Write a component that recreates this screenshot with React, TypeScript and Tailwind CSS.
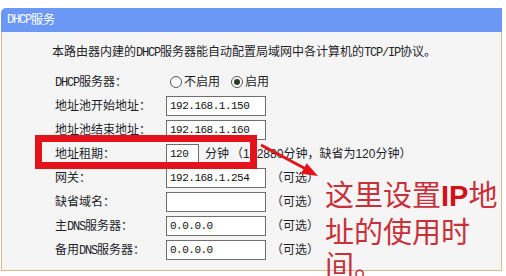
import React from "react";

function Radio({ checked }: { checked?: boolean }) {
  return (
    <span className="inline-flex items-center justify-center w-[12px] h-[12px] rounded-full border border-[#555] bg-white">
      {checked ? <span className="w-[6px] h-[6px] rounded-full bg-[#2a3a2a]" /> : null}
    </span>
  );
}

function M({ children }: { children: React.ReactNode }) {
  return (
    <span className="font-['Liberation_Mono',monospace] text-[12px] tracking-[-1.2px]">{children}</span>
  );
}

function Field({ value, w = "w-[100px]" }: { value: string; w?: string }) {
  return (
    <div
      className={`${w} h-[20px] bg-white border border-[#6f6f6f] flex items-center pl-[3px] text-[11px] tracking-[-0.5px] text-[#111] font-['Liberation_Mono',monospace]`}
    >
      {value}
    </div>
  );
}

function Label({ children }: { children: React.ReactNode }) {
  return <div className="w-[111px] shrink-0">{children}</div>;
}

function Optional() {
  return <span className="ml-[5px]">（可选）</span>;
}

export default function App() {
  return (
    <div className="relative w-[506px] h-[276px] bg-white overflow-hidden font-['Liberation_Sans','Noto_Sans_CJK_SC',sans-serif] text-[12px]">
      <div className="pt-2 pl-px">
        <div className="w-[501px] h-[24px] bg-[#6b98f4] rounded-tl-[5px] flex items-center pl-[6px] text-white">
          <M>DHCP</M>服务
        </div>
        <div className="w-[501px] bg-[#f5f5f5] border-x border-b border-[#d6b98c] pt-3 pb-2 text-[#1e1e2a]">
          <div className="pl-[50px] leading-4">
            本路由器内建的<M>DHCP</M>服务器能自动配置局域网中各计算机的<M>TCP/IP</M>协议。
          </div>
          <div className="mt-[9px] pl-[53px] flex flex-col">
            <div className="h-[24px] flex items-center">
              <Label>
                <M>DHCP</M>服务器：
              </Label>
              <div className="flex items-center ml-[4px]">
                <Radio />
                <span className="ml-[2px]">不启用</span>
                <span className="ml-[11px] flex items-center">
                  <Radio checked />
                </span>
                <span className="ml-[2px]">启用</span>
              </div>
            </div>
            <div className="h-[24px] flex items-center">
              <Label>地址池开始地址：</Label>
              <Field value="192.168.1.150" />
            </div>
            <div className="h-[24px] flex items-center">
              <Label>地址池结束地址：</Label>
              <Field value="192.168.1.160" />
            </div>
            <div className="h-[24px] flex items-center">
              <Label>地址租期：</Label>
              <Field value="120" w="w-[33px]" />
              <span className="ml-[6px]">分钟</span>
              <span className="ml-[2px]">（1~2880分钟，缺省为120分钟）</span>
            </div>
            <div className="h-[24px] flex items-center">
              <Label>网关：</Label>
              <Field value="192.168.1.254" />
              <Optional />
            </div>
            <div className="h-[24px] flex items-center">
              <Label>缺省域名：</Label>
              <Field value="" />
              <Optional />
            </div>
            <div className="h-[24px] flex items-center">
              <Label>
                主<M>DNS</M>服务器：
              </Label>
              <Field value="0.0.0.0" />
              <Optional />
            </div>
            <div className="h-[24px] flex items-center">
              <Label>
                备用<M>DNS</M>服务器：
              </Label>
              <Field value="0.0.0.0" />
              <Optional />
            </div>
          </div>
        </div>
      </div>

      {/* annotation: red rectangle */}
      <div className="absolute left-[35px] top-[135px] w-[222px] h-[34px] border-[7px] border-[#e3121b]" />

      {/* annotation: arrow */}
      <svg className="absolute left-0 top-0" width="506" height="276" viewBox="0 0 506 276">
        <line x1="261" y1="145" x2="305" y2="168.5" stroke="#e3121b" strokeWidth="3" />
        <polygon points="318,176 301,173.8 306.7,163.2" fill="#e3121b" />
      </svg>

      {/* annotation: big text */}
      <div className="absolute left-[325px] top-[176px] text-[29px] leading-[34px] text-[#c8303a] font-['Noto_Sans_CJK_SC',sans-serif] whitespace-nowrap">
        <div>
          这里设置<span className="font-['Liberation_Sans',sans-serif] font-bold text-[#d40f16]">IP</span>地
        </div>
        <div>址的使用时</div>
        <div>间。</div>
      </div>
    </div>
  );
}
